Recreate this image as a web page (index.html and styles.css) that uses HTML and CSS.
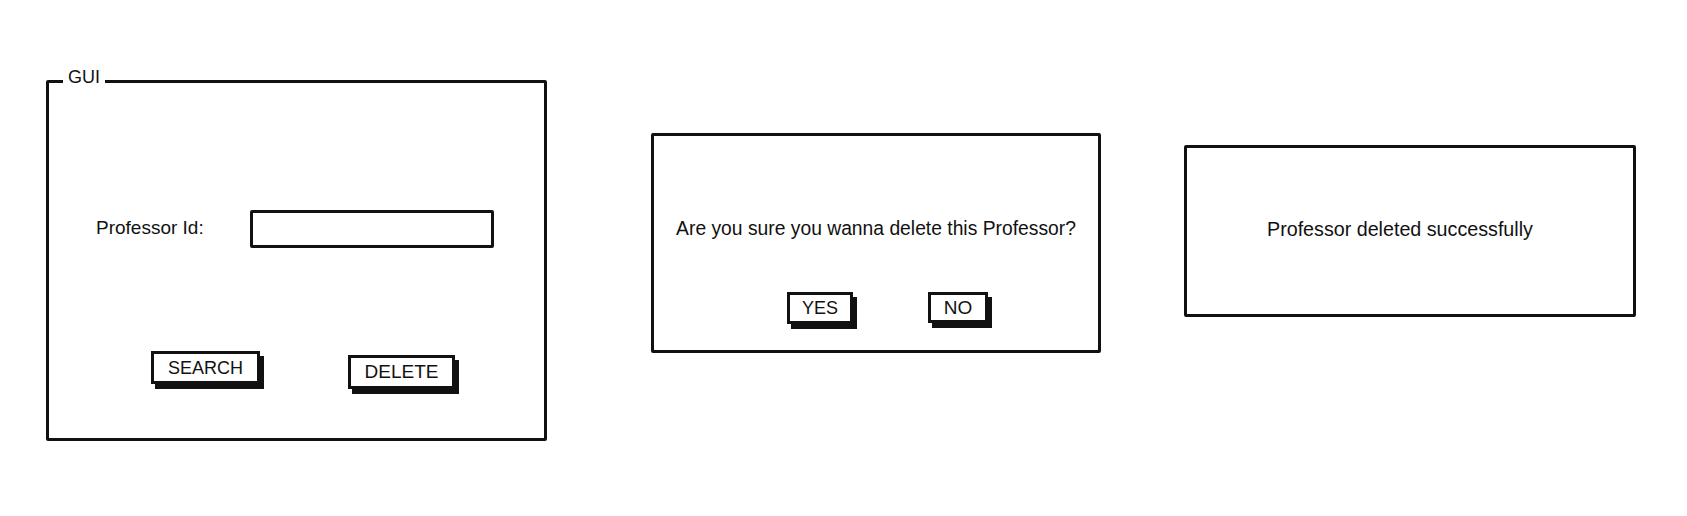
FILE: index.html
```html
<!DOCTYPE html>
<html lang="en">
<head>
<meta charset="utf-8">
<title>Professor delete wireframe</title>
<link rel="stylesheet" href="styles.css">
</head>
<body>
<div class="canvas">
  <div class="frame frame-gui">
    <span class="frame-title">GUI</span>
    <div class="field-row">
      <span class="label">Professor Id:</span>
      <div class="input"></div>
    </div>
    <div class="gui-btns">
      <div class="btn btn-search">SEARCH</div>
      <div class="btn btn-delete">DELETE</div>
    </div>
  </div>
  <div class="frame frame-confirm">
    <p class="msg">Are you sure you wanna delete this Professor?</p>
    <div class="confirm-btns">
      <div class="btn btn-yes">YES</div>
      <div class="btn btn-no">NO</div>
    </div>
  </div>
  <div class="frame frame-done">
    <p class="msg msg-left">Professor deleted successfully</p>
  </div>
</div>
</body>
</html>
```
FILE: styles.css
```css
html, body {
  margin: 0;
  padding: 0;
  background: #fff;
}
body {
  font-family: "Liberation Sans", Arial, sans-serif;
  color: #111;
  width: 1687px;
  height: 516px;
  overflow: hidden;
}
.canvas {
  display: flex;
  align-items: flex-start;
  padding-left: 46px;
}
.frame {
  position: relative;
  box-sizing: border-box;
  border: 3px solid #111;
  border-radius: 2px;
  flex: none;
}
.frame-gui {
  width: 501px;
  height: 361px;
  margin-top: 80px;
}
.frame-title {
  position: absolute;
  top: -17px;
  left: 14px;
  padding: 0 5px;
  background: #fff;
  font-size: 18px;
  line-height: 22px;
}
.field-row {
  display: flex;
  align-items: flex-start;
  margin-top: 127px;
  padding-left: 47px;
}
.label {
  width: 154px;
  margin-top: 7px;
  font-size: 19px;
  line-height: 22px;
}
.input {
  width: 244px;
  height: 38px;
  box-sizing: border-box;
  border: 3px solid #111;
  border-radius: 2px;
}
.gui-btns {
  display: flex;
  align-items: flex-start;
  gap: 88px;
  margin-top: 103px;
  padding-left: 102px;
}
.btn {
  box-sizing: border-box;
  border: 3px solid #111;
  box-shadow: 4px 5px 0 #111;
  background: #fff;
  display: flex;
  align-items: center;
  justify-content: center;
  font-size: 18px;
  line-height: 22px;
}
.btn-search { width: 109px; height: 33px; }
.btn-delete { width: 107px; height: 34px; margin-top: 4px; font-size: 19px; }
.frame-confirm {
  width: 450px;
  height: 220px;
  margin-top: 133px;
  margin-left: 104px;
}
.msg {
  margin: 0;
  padding-top: 82px;
  text-align: center;
  font-size: 19.3px;
  line-height: 22px;
}
.confirm-btns {
  display: flex;
  gap: 75px;
  margin-top: 52px;
  padding-left: 133px;
}
.btn-yes { width: 66px; height: 32px; }
.btn-no { width: 60px; height: 31px; font-size: 19px; }
.frame-done {
  width: 452px;
  height: 172px;
  margin-top: 145px;
  margin-left: 83px;
  display: flex;
  align-items: center;
  padding-left: 80px;
  padding-bottom: 4px;
}
.msg-left {
  padding-top: 0;
  text-align: left;
  font-size: 19.7px;
}
```
